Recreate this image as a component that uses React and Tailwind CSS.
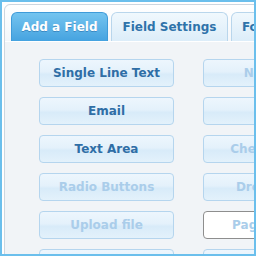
export default function App() {
  const fields = [
    ["Single Line Text", true, "Number", false],
    ["Email", true, "Date", false],
    ["Text Area", true, "Checkboxes", false],
    ["Radio Buttons", false, "Dropdown", false],
    ["Upload file", false, "Page Break", false, true],
    ["Section Break", false, "Time", false],
  ];

  return (
    <div
      className="w-[256px] h-[256px] border-2 border-[#6bbfec] bg-white p-[2px] overflow-hidden"
      style={{ fontFamily: '"DejaVu Sans", Verdana, sans-serif' }}
    >
      <div className="w-[340px] h-[260px] border border-[#cdd6df] rounded-tl-[6px] bg-[#f1f4f7] flex flex-col">
        {/* Tabs */}
        <div className="flex gap-[3px] pl-[6px] pt-[7px] bg-gradient-to-b from-[#ffffff] to-[#f4f7fa] rounded-tl-[6px]">
          <div className="w-[97px] shrink-0 h-[29px] rounded-t-[6px] border border-[#3f9bd9] border-b-0 bg-gradient-to-b from-[#74c4ef] to-[#45a3e0] flex items-center justify-center text-[12px] font-bold text-white whitespace-nowrap [text-shadow:0_1px_0_rgba(30,100,160,0.5)]">
            Add a Field
          </div>
          <div className="w-[117px] shrink-0 h-[29px] rounded-t-[6px] border border-[#b9d6ec] border-b-0 bg-gradient-to-b from-[#f0f8fd] to-[#dcedf9] flex items-center justify-center text-[12px] font-bold text-[#2f73aa] whitespace-nowrap">
            Field Settings
          </div>
          <div className="w-[117px] shrink-0 h-[29px] rounded-t-[6px] border border-[#b9d6ec] border-b-0 bg-gradient-to-b from-[#f0f8fd] to-[#dcedf9] flex items-center justify-center text-[12px] font-bold text-[#2f73aa] whitespace-nowrap">
            Form Settings
          </div>
        </div>

        {/* Buttons */}
        <div className="grid grid-cols-[135px_135px] gap-x-[29px] gap-y-[10px] pl-[34px] pt-[17px] border-t border-[#ffffff]">
          {fields.map(([a, aOn, b, bOn, bWhite]) => (
            <>
              <FieldButton key={a} label={a} on={aOn} />
              <FieldButton key={b} label={b} on={bOn} white={bWhite} />
            </>
          ))}
        </div>
      </div>
    </div>
  );
}

function FieldButton({ label, on, white }) {
  return (
    <div
      className={
        "h-[28px] rounded-[4px] flex items-center justify-center text-[12px] font-bold whitespace-nowrap " +
        (white
          ? "border border-[#8e8e8e] bg-white "
          : "border border-[#b5d5ee] bg-[linear-gradient(#edf6fd_0%,#e4f1fb_45%,#d8ebf9_55%,#e3f1fb_100%)] ") +
        (on ? "text-[#2f6ea6]" : "text-[#aacdea]")
      }
    >
      {label}
    </div>
  );
}
